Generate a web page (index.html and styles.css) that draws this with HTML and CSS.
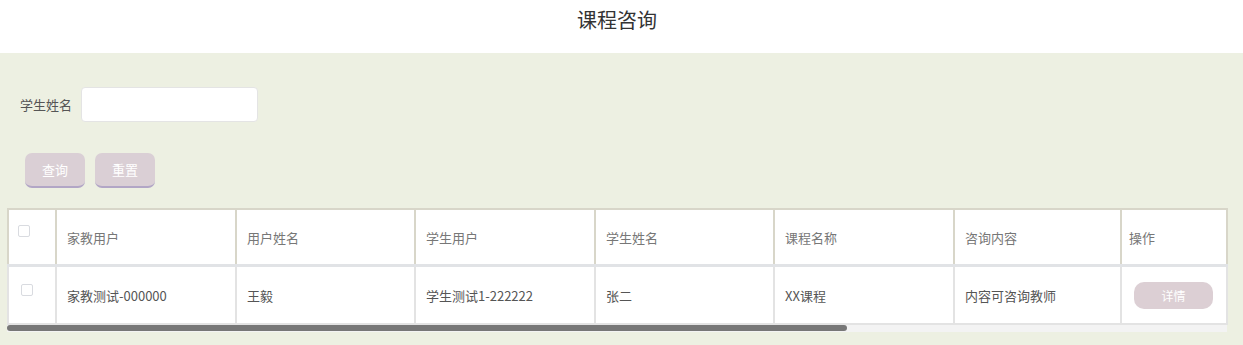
FILE: index.html
```html
<!DOCTYPE html>
<html lang="zh-CN">
<head>
    <meta charset="UTF-8">
    <meta name="viewport" content="width=device-width, initial-scale=1.0">
    <link rel="stylesheet" href="styles.css">
    <title>课程咨询</title>
</head>
<body>
    <div class="title">课程咨询</div>
    <div class="main">
        <div class="search">
            <label class="search-label">学生姓名</label>
            <input class="search-input" type="text">
        </div>
        <div class="btns">
            <button class="btn">查询</button>
            <button class="btn">重置</button>
        </div>
        <div class="table-wrap">
            <table class="grid">
                <colgroup>
                    <col style="width:48px">
                    <col style="width:180px">
                    <col style="width:179px">
                    <col style="width:180px">
                    <col style="width:179px">
                    <col style="width:180px">
                    <col style="width:167px">
                    <col style="width:106px">
                </colgroup>
                <thead>
                    <tr>
                        <th><span class="check"></span></th>
                        <th>家教用户</th>
                        <th>用户姓名</th>
                        <th>学生用户</th>
                        <th>学生姓名</th>
                        <th>课程名称</th>
                        <th>咨询内容</th>
                        <th class="fixed">操作</th>
                    </tr>
                </thead>
                <tbody>
                    <tr>
                        <td><span class="check check-body"></span></td>
                        <td>家教测试-000000</td>
                        <td>王毅</td>
                        <td>学生测试1-222222</td>
                        <td>张二</td>
                        <td>XX课程</td>
                        <td>内容可咨询教师</td>
                        <td class="fixed"><button class="detail">详情</button></td>
                    </tr>
                </tbody>
            </table>
            <div class="scrollbar"><div class="thumb"></div></div>
        </div>
    </div>
</body>
</html>
```

FILE: styles.css
```css
body{
    margin: 0px;
    font-family: "Noto Sans CJK SC", "Liberation Sans", sans-serif;
    background: #edf0e2;
    height: 345px;
    overflow: hidden;
}
.title{
    background: #ffffff;
    height: 53px;
    line-height: 40px;
    text-align: center;
    font-size: 20px;
    color: #333333;
    padding-right: 9px;
}
.main{
    padding: 34px 16px 0px 7px;
}
.search{
    display: flex;
    align-items: center;
    padding-left: 13px;
    height: 35px;
}
.search-label{
    font-size: 13px;
    color: #555555;
    margin-right: 9px;
}
.search-input{
    box-sizing: border-box;
    width: 177px;
    height: 35px;
    border: 1px solid #e4e4e4;
    border-radius: 4px;
    background: #ffffff;
    outline: none;
}
.btns{
    display: flex;
    gap: 10px;
    padding-left: 18px;
    margin-top: 31px;
}
.btn{
    box-sizing: border-box;
    width: 60px;
    height: 35px;
    border: none;
    border-bottom: 2px solid #b2a6c6;
    border-radius: 7px;
    background: #dacfd5;
    color: #ffffff;
    font-family: inherit;
    font-size: 13px;
    padding: 0px;
}
.table-wrap{
    margin-top: 20px;
    width: 1220px;
}
.grid{
    table-layout: fixed;
    border-collapse: collapse;
    width: 1219px;
    background: #ffffff;
}
.grid th, .grid td{
    text-align: left;
    font-size: 13px;
    padding: 0px 10px;
    white-space: nowrap;
    overflow: hidden;
}
.grid th{
    height: 54px;
    color: #777777;
    font-weight: 400;
    border: 2px solid #d8d6c9;
    border-bottom: 3px solid #e1e3e6;
}
.grid td{
    height: 56px;
    color: #555555;
    border: 2px solid #e3e3e3;
    border-top: none;
}
.grid th:first-child{
    padding-left: 9px;
    vertical-align: top;
    padding-top: 15px;
    height: 39px;
}
.grid td:first-child{
    padding-left: 12px;
    vertical-align: top;
    padding-top: 17px;
    height: 39px;
}
.grid .fixed{
    padding-left: 7px;
    box-shadow: -6px 0px 8px rgba(0, 0, 0, 0.05);
}
.check{
    display: block;
    box-sizing: border-box;
    width: 12px;
    height: 12px;
    border: 1px solid #d9dbe0;
    border-radius: 2px;
    background: #ffffff;
}
.detail{
    width: 79px;
    height: 27px;
    margin-left: 5px;
    border: none;
    border-radius: 10px;
    background: #dccfd4;
    color: #ffffff;
    font-family: inherit;
    font-size: 12px;
}
.scrollbar{
    height: 7px;
    background: #f3f3f3;
}
.thumb{
    width: 840px;
    height: 6px;
    border-radius: 3px;
    background: #777777;
}
```
